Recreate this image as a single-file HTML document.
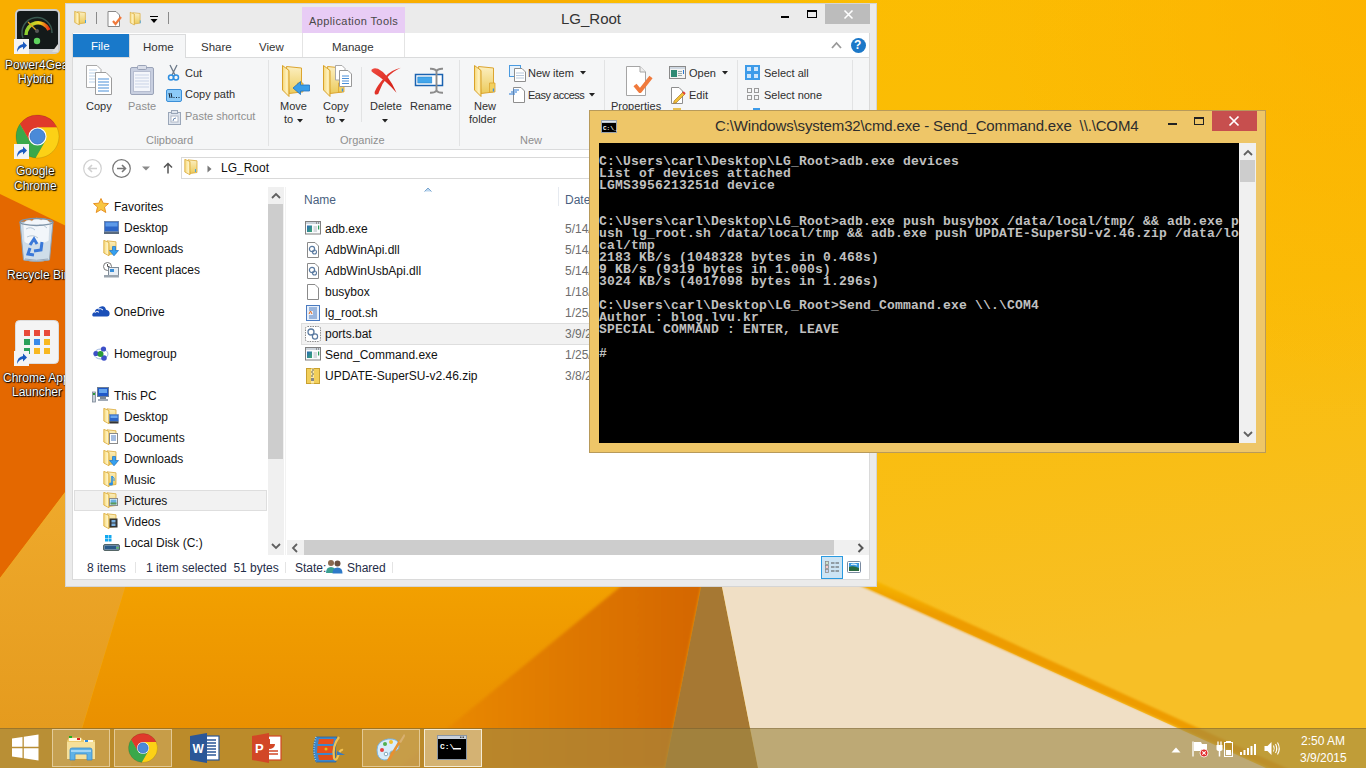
<!DOCTYPE html>
<html><head><meta charset="utf-8">
<style>
*{box-sizing:border-box;margin:0;padding:0}
html,body{width:1366px;height:768px;overflow:hidden;background:#f5a600;font-family:"Liberation Sans",sans-serif;font-size:12px;color:#000}
.a{position:absolute}
.t{position:absolute;white-space:pre;line-height:1}
svg{position:absolute;overflow:visible}
</style></head><body>
<svg width="0" height="0" style="position:absolute"><defs>
<linearGradient id="fBack" x1="0" y1="0" x2="0" y2="1"><stop offset="0" stop-color="#fcefc0"/><stop offset="1" stop-color="#eccb5c"/></linearGradient>
<linearGradient id="fFront" x1="0" y1="0" x2="1" y2="0"><stop offset="0" stop-color="#f6d878"/><stop offset="0.7" stop-color="#fff3c4"/><stop offset="1" stop-color="#f2d270"/></linearGradient>
<symbol id="f16" viewBox="0 0 16 17"><path d="M4 0.8 L13 1.8 V13.5 L6 14.5Z" fill="url(#fBack)" stroke="#d9aa3a" stroke-width="0.8"/><path d="M0.8 0.3 L6 2.5 V15.8 L0.8 13Z" fill="url(#fFront)" stroke="#d9aa3a" stroke-width="0.8"/></symbol>
<symbol id="f32" viewBox="0 0 34 40"><path d="M10.5 6.5 L25.5 8 V32 L13 33.5Z" fill="url(#fBack)" stroke="#dca530" stroke-width="1"/><path d="M21.5 23 H27 V32 H21.5Z" fill="#f2d060" stroke="#dca530" stroke-width="0.8"/><rect x="24.8" y="28.5" width="1.3" height="3" fill="#3b8fe6"/><path d="M6.5 5.5 L13 10.5 V36.5 L6.5 30Z" fill="url(#fFront)" stroke="#d9a22a" stroke-width="1"/></symbol>
</defs></svg>
<!-- WALLPAPER -->
<svg class="a" style="left:0;top:0" width="1366" height="768" viewBox="0 0 1366 768">
<defs>
<linearGradient id="gY" x1="0" y1="0" x2="0.3" y2="1">
<stop offset="0" stop-color="#fcbc00"/><stop offset="0.6" stop-color="#fabd08"/><stop offset="1" stop-color="#f7bf26"/>
</linearGradient>
<linearGradient id="gOr" gradientUnits="userSpaceOnUse" x1="450" y1="0" x2="700" y2="0">
<stop offset="0" stop-color="#e88800"/><stop offset="1" stop-color="#d46600"/>
</linearGradient>
<linearGradient id="gSt" gradientUnits="userSpaceOnUse" x1="0" y1="0" x2="-4" y2="10">
<stop offset="0" stop-color="#f4b200"/><stop offset="1" stop-color="#ee9e00"/>
</linearGradient>
</defs>
<rect x="0" y="0" width="1366" height="768" fill="url(#gY)"/>
<rect x="0" y="0" width="600" height="768" fill="#f9ae00"/>
<radialGradient id="gTR" gradientUnits="userSpaceOnUse" cx="1366" cy="0" r="420"><stop offset="0" stop-color="#fdb200" stop-opacity="0.8"/><stop offset="1" stop-color="#fdb200" stop-opacity="0"/></radialGradient>
<rect x="600" y="0" width="766" height="768" fill="url(#gTR)"/>
<!-- dark orange wedge left -->
<polygon points="0,194 213,297 0,578" fill="#e46800"/>
<!-- pale strip bottom-left -->
<linearGradient id="gPale" gradientUnits="userSpaceOnUse" x1="0" y1="480" x2="0" y2="728"><stop offset="0" stop-color="#efaa2c"/><stop offset="1" stop-color="#e59b1e"/></linearGradient>
<polygon points="0,578 213,297 300,297 125,588 82,728 70,768 0,768" fill="url(#gPale)"/>
<!-- bottom middle orange -->
<linearGradient id="gMid" gradientUnits="userSpaceOnUse" x1="0" y1="587" x2="0" y2="728"><stop offset="0" stop-color="#f2a000"/><stop offset="1" stop-color="#ea9000"/></linearGradient>
<polygon points="125,588 153,492 720,480 701,587 665,768 70,768" fill="url(#gMid)"/>
<!-- darker orange diagonal -->
<filter id="bl" x="-10%" y="-10%" width="120%" height="120%"><feGaussianBlur stdDeviation="1.5"/></filter>
<polygon points="620,587 740,490 701,587 665,768 399,768" fill="url(#gOr)" filter="url(#bl)"/>
<!-- khaki shadow -->
<polygon points="701,587 722,587 758,768 665,768" fill="#a67833"/>
<!-- cream -->
<polygon points="722,587 866,587 1266,768 758,768" fill="#f0dfc5"/>
<!-- fold stripe -->
<filter id="bl2" x="-5%" y="-20%" width="110%" height="140%"><feGaussianBlur stdDeviation="1.2"/></filter>
<g filter="url(#bl2)"><polygon points="700,501 863,575 1400,820 1400,826 863,587 700,513" fill="url(#gSt2)"/></g>
<linearGradient id="gSt2" gradientUnits="userSpaceOnUse" x1="1000" y1="618" x2="996" y2="632"><stop offset="0" stop-color="#f6b400"/><stop offset="1" stop-color="#ee9c00"/></linearGradient>

</svg>

<!-- DESKTOP ICONS -->
<div id="dicons" style="font-size:12px;color:#fff">
<svg style="left:14px;top:8px" width="47" height="47" viewBox="0 0 47 47"><rect x="1" y="1" width="45" height="45" rx="5" fill="#c9ccd0"/><rect x="3" y="3" width="41" height="38" rx="3" fill="#141a1a"/><path d="M9 30 A15 15 0 1 1 38 25" stroke="#3a5a50" stroke-width="1.5" fill="none"/><path d="M12 27 A12 12 0 0 1 35 22" stroke="url(#gauge)" stroke-width="3.5" fill="none"/><path d="M22 22 L14 14" stroke="#e0a020" stroke-width="1.3"/><circle cx="23" cy="23" r="2" fill="#555"/><circle cx="23" cy="33" r="3.2" fill="#5fd35f"/><path d="M38 44 L44 36 V44Z" fill="#ddd"/><defs><linearGradient id="gauge" x1="0" x2="1"><stop offset="0" stop-color="#8ad030"/><stop offset="0.6" stop-color="#f0d020"/><stop offset="1" stop-color="#e83010"/></linearGradient></defs></svg>
<svg style="left:14px;top:39px" width="15" height="15" viewBox="0 0 15 15"><rect x="0" y="0" width="15" height="15" fill="#f4f4f4"/><path d="M3 13 Q3 6 9 5 V2.5 L13 6.5 L9 10.5 V8 Q5 8.5 3 13Z" fill="#1a5ac0"/></svg>
<div class="t" style="left:5px;top:59px;text-shadow:0 0 2px #000,1px 1px 1px #000,0 0 1px #000">Power4Gear</div>
<div class="t" style="left:18px;top:73px;text-shadow:0 0 2px #000,1px 1px 1px #000,0 0 1px #000">Hybrid</div>
<svg style="left:15px;top:114px" width="45" height="45" viewBox="0 0 45 45"><g transform="translate(22.5,22.5)"><path d="M0 0 L-7.82 4.51 L-17.58 -12.38 A21.5 21.5 0 0 1 19.51 -9.03 L0.00 -9.03Z" fill="#e0392b"/><path d="M0 0 L0.00 -9.03 L19.51 -9.03 A21.5 21.5 0 0 1 -1.94 21.41 L7.82 4.51Z" fill="#fcd116"/><path d="M0 0 L7.82 4.51 L-1.94 21.41 A21.5 21.5 0 0 1 -17.58 -12.38 L-7.82 4.51Z" fill="#3ba84a"/><circle r="21.50" fill="none" stroke="rgba(0,0,0,0.12)" stroke-width="1"/><circle r="9.03" fill="#fff"/><circle r="7.52" fill="#4a8ad8"/><circle r="7.52" fill="none" stroke="#2f6cc0" stroke-width="0.8"/></g></svg>
<svg style="left:14px;top:144px" width="15" height="15" viewBox="0 0 15 15"><rect x="0" y="0" width="15" height="15" fill="#f4f4f4"/><path d="M3 13 Q3 6 9 5 V2.5 L13 6.5 L9 10.5 V8 Q5 8.5 3 13Z" fill="#1a5ac0"/></svg>
<div class="t" style="left:16px;top:165px;text-shadow:0 0 2px #000,1px 1px 1px #000,0 0 1px #000">Google</div>
<div class="t" style="left:14px;top:180px;text-shadow:0 0 2px #000,1px 1px 1px #000,0 0 1px #000">Chrome</div>
<svg style="left:17px;top:215px" width="39" height="48" viewBox="0 0 39 48"><path d="M3 7 L6.5 45 Q19.5 48 32.5 45 L36 7Z" fill="#cfdde9" stroke="#8fa3b6"/><path d="M6 9 Q10 3 15 6 Q19 1 24 5 Q29 2 33 8 L32 26 Q26 30 20 28 Q12 31 7 27Z" fill="#f2f6fa" stroke="#c8d4de" stroke-width="0.6"/><path d="M9 14 Q14 11 18 15 M22 10 Q27 9 30 13 M10 22 Q16 19 21 23" stroke="#b8c8d6" fill="none"/><ellipse cx="19.5" cy="7" rx="16.5" ry="3.5" fill="none" stroke="#7f94a8" stroke-width="1.3"/><path d="M13 30 L17 24 L20 29 M25 27 L24 35 L17 36 M13 33 L11 39 L17 40" stroke="#3a78d8" stroke-width="3" fill="none"/><path d="M8 44 Q19.5 46.5 31 44" stroke="#9aaabc" fill="none"/></svg>
<div class="t" style="left:7px;top:269px;text-shadow:0 0 2px #000,1px 1px 1px #000,0 0 1px #000">Recycle Bin</div>
<svg style="left:15px;top:320px" width="44" height="44" viewBox="0 0 44 44"><rect x="0.5" y="0.5" width="43" height="43" rx="4" fill="#f4f4f4" stroke="#ddd"/><g><rect x="9" y="10" width="6" height="6" fill="#e84a3a"/><rect x="19" y="10" width="6" height="6" fill="#e84a3a"/><rect x="29" y="10" width="6" height="6" fill="#e84a3a"/><rect x="9" y="19" width="6" height="6" fill="#2aa05a"/><rect x="19" y="19" width="6" height="6" fill="#3a8ae8"/><rect x="29" y="19" width="6" height="6" fill="#f8b820"/><rect x="9" y="28" width="6" height="6" fill="#2aa05a"/><rect x="19" y="28" width="6" height="6" fill="#f8b820"/><rect x="29" y="28" width="6" height="6" fill="#f8b820"/></g></svg>
<svg style="left:14px;top:351px" width="15" height="15" viewBox="0 0 15 15"><rect x="0" y="0" width="15" height="15" fill="#f4f4f4"/><path d="M3 13 Q3 6 9 5 V2.5 L13 6.5 L9 10.5 V8 Q5 8.5 3 13Z" fill="#1a5ac0"/></svg>
<div class="t" style="left:3px;top:372px;text-shadow:0 0 2px #000,1px 1px 1px #000,0 0 1px #000">Chrome App</div>
<div class="t" style="left:12px;top:386px;text-shadow:0 0 2px #000,1px 1px 1px #000,0 0 1px #000">Launcher</div>
</div>


<!-- EXPLORER WINDOW -->
<div class="a" style="left:65px;top:3px;width:812px;height:584px;background:#ebebeb;border:1px solid #d5d5d5"></div>
<!-- quick access toolbar -->
<svg style="left:74px;top:10px" width="14" height="17" viewBox="0 0 14 17"><use href="#f16" width="14" height="17"/><rect x="11" y="10" width="1" height="3" fill="#4aa3e0"/></svg>
<div class="a" style="left:96px;top:12px;width:1px;height:12px;background:#8a8a8a"></div>
<svg style="left:107px;top:11px" width="16" height="16" viewBox="0 0 16 16"><path d="M1 0.5 H9 L12.5 4 V15.5 H1Z" fill="#fff" stroke="#888"/><path d="M6 10 L8.5 13 L14 6" stroke="#f07a3c" stroke-width="2.2" fill="none"/></svg>
<svg style="left:129px;top:11px" width="14" height="16" viewBox="0 0 14 17"><use href="#f16" width="14" height="17"/><rect x="11" y="10" width="1" height="3" fill="#4aa3e0"/></svg>
<svg style="left:150px;top:16px" width="9" height="8" viewBox="0 0 9 8"><rect x="0" y="0" width="8" height="1" fill="#000"/><path d="M0.5 3 H7.5 L4 7Z" fill="#000"/></svg>
<div class="a" style="left:168px;top:12px;width:1px;height:12px;background:#8a8a8a"></div>
<!-- application tools -->
<div class="a" style="left:302px;top:7px;width:103px;height:26px;background:#e8ccf5"></div>
<div class="t" style="left:309px;top:16px;font-size:11px;letter-spacing:0.4px;color:#484848">Application Tools</div>
<div class="t" style="left:561px;top:11px;font-size:15px;color:#333">LG_Root</div>
<!-- caption buttons -->
<div class="a" style="left:781px;top:16px;width:8px;height:2px;background:#000"></div>
<div class="a" style="left:807px;top:10px;width:10px;height:8px;border:1px solid #000;border-top-width:2px"></div>
<div class="a" style="left:825px;top:4px;width:45px;height:20px;background:#bcbcbc"></div>
<svg style="left:843px;top:9px" width="12" height="12" viewBox="0 0 12 12"><path d="M1.5 1.5 L9.5 9.5 M9.5 1.5 L1.5 9.5" stroke="#fff" stroke-width="1.6"/></svg>
<!-- tab row -->
<div class="a" style="left:73px;top:33px;width:796px;height:24px;background:#fff"></div>
<div class="a" style="left:73px;top:34px;width:56px;height:23px;background:#1979ca"></div>
<div class="t" style="left:91px;top:41px;font-size:11.5px;color:#fff">File</div>
<div class="a" style="left:129px;top:34px;width:57px;height:24px;background:#f5f6f7;border:1px solid #dadbdc;border-bottom:none"></div>
<div class="t" style="left:143px;top:42px;font-size:11.5px;color:#333">Home</div>
<div class="t" style="left:201px;top:42px;font-size:11.5px;color:#333">Share</div>
<div class="t" style="left:259px;top:42px;font-size:11.5px;color:#333">View</div>
<div class="a" style="left:302px;top:33px;width:1px;height:24px;background:#e4e4e4"></div>
<div class="a" style="left:404px;top:33px;width:1px;height:24px;background:#e4e4e4"></div>
<div class="t" style="left:332px;top:42px;font-size:11.5px;color:#333">Manage</div>
<svg style="left:831px;top:41px" width="11" height="8" viewBox="0 0 11 8"><path d="M1 7 L5.5 2 L10 7" stroke="#999" stroke-width="1.8" fill="none"/></svg>
<div class="a" style="left:851px;top:38px;width:15px;height:15px;border-radius:50%;background:#1c78c8"></div>
<div class="t" style="left:854px;top:39px;font-size:12px;font-weight:bold;color:#fff">?</div>
<!-- ribbon body -->
<div class="a" style="left:73px;top:57px;width:796px;height:93px;background:#f5f6f7;border-top:1px solid #dadbdc;border-bottom:1px solid #dadbdc"></div>
<div class="a" style="left:130px;top:57px;width:55px;height:2px;background:#f5f6f7"></div>
<!-- RIBBON CONTENT -->
<div id="rib" style="font-size:11px;color:#2e2e2e">
<!-- Copy icon -->
<svg style="left:84px;top:64px" width="30" height="32" viewBox="0 0 30 32"><path d="M2.5 1.5 H13 L17 5.5 V23.5 H2.5Z" fill="#fff" stroke="#a9a9a9"/><path d="M5 6h8M5 9h9M5 12h9M5 15h9M5 18h9" stroke="#bcd3ea"/><path d="M11.5 8.5 H22 L27.5 14 V30.5 H11.5Z" fill="#fff" stroke="#9c9c9c"/><path d="M14 15h11M14 18h11M14 21h11M14 24h11M14 27h11" stroke="#4a8fd8" stroke-width="1.2"/></svg>
<div class="t" style="left:86px;top:101px">Copy</div>
<!-- Paste icon -->
<svg style="left:129px;top:64px" width="27" height="32" viewBox="0 0 27 32"><rect x="1.5" y="3.5" width="23" height="27" rx="1.5" fill="#c8cfe0" stroke="#9aa3b8"/><rect x="4.5" y="7.5" width="17" height="20" fill="#f4f6fb" stroke="#b6bdd0"/><path d="M6 11h14M6 14h14M6 17h14M6 20h14M6 23h14" stroke="#c9d3e6"/><rect x="8.5" y="1.5" width="9" height="4" rx="1" fill="#d9dde8" stroke="#9aa3b8"/></svg>
<div class="t" style="left:128px;top:101px;color:#8f8f8f">Paste</div>
<!-- Cut -->
<svg style="left:167px;top:64px" width="13" height="17" viewBox="0 0 13 17"><path d="M3 1 L8 11 M10 1 L5 11" stroke="#6b7888" stroke-width="1.3"/><circle cx="4" cy="13.5" r="2.5" fill="none" stroke="#2d8ee0" stroke-width="1.5"/><circle cx="9" cy="13.5" r="2.5" fill="none" stroke="#2d8ee0" stroke-width="1.5"/></svg>
<div class="t" style="left:185px;top:68px">Cut</div>
<!-- Copy path -->
<svg style="left:166px;top:89px" width="16" height="13" viewBox="0 0 16 13"><rect x="0.5" y="0.5" width="15" height="12" rx="1.5" fill="#8ccaf7" stroke="#3b8fd8"/><path d="M3 4 L4 9 M5 4 L6 9 M7.5 8.5h1M10 8.5h1M12.5 8.5h1" stroke="#123" stroke-width="1"/></svg>
<div class="t" style="left:185px;top:89px">Copy path</div>
<!-- Paste shortcut -->
<svg style="left:168px;top:110px" width="13" height="15" viewBox="0 0 13 15"><rect x="0.5" y="2.5" width="12" height="12" fill="#dfe5ee" stroke="#9aa6b8"/><rect x="3.5" y="0.5" width="6" height="3" fill="#dfe5ee" stroke="#9aa6b8"/><rect x="3" y="6" width="7" height="6" fill="#fff" stroke="#b0b8c6"/><path d="M5 11 Q5 8 8 8" stroke="#6b87b0" fill="none"/></svg>
<div class="t" style="left:185px;top:111px;color:#8f8f8f">Paste shortcut</div>
<div class="t" style="left:146px;top:135px;color:#8f8f8f">Clipboard</div>
<div class="a" style="left:268px;top:60px;width:1px;height:86px;background:#e2e3e4"></div>
<!-- Move to -->
<svg style="left:276px;top:60px" width="36" height="40" viewBox="0 0 36 40"><use href="#f32" width="34" height="40"/><path d="M17 28 L24.5 21.5 V25 H33.5 V31 H24.5 V34.5Z" fill="#3a9ee8" stroke="#1f72c0" stroke-width="0.8"/></svg>
<div class="t" style="left:280px;top:101px">Move</div>
<div class="t" style="left:284px;top:114px">to</div>
<svg style="left:297px;top:119px" width="6" height="4" viewBox="0 0 6 4"><path d="M0 0H6L3 3.5Z" fill="#222"/></svg>
<!-- Copy to -->
<svg style="left:317px;top:60px" width="36" height="40" viewBox="0 0 36 40"><use href="#f32" width="34" height="40"/><path d="M18.5 5.5 H25 L28 8.5 V20 H18.5Z" fill="#fff" stroke="#a9a9a9"/><path d="M22.5 10.5 H31 L34.5 14 V26.5 H22.5Z" fill="#fff" stroke="#999"/><path d="M25 16h7M25 18.5h7M25 21h7M25 23.5h7" stroke="#4a8fd8"/></svg>
<div class="t" style="left:323px;top:101px">Copy</div>
<div class="t" style="left:326px;top:114px">to</div>
<svg style="left:339px;top:119px" width="6" height="4" viewBox="0 0 6 4"><path d="M0 0H6L3 3.5Z" fill="#222"/></svg>
<div class="a" style="left:361px;top:67px;width:1px;height:55px;background:#e2e3e4"></div>
<!-- Delete -->
<svg style="left:371px;top:67px" width="30" height="28" viewBox="0 0 30 28"><defs><linearGradient id="gDel" x1="0" y1="0" x2="1" y2="1"><stop offset="0" stop-color="#f04a40"/><stop offset="1" stop-color="#d01a10"/></linearGradient></defs><path d="M0.5 2.8 Q2.5 0.3 7 1.8 Q17 6.5 25.5 25.8 Q15 13.5 2.2 5.8 Q-0.3 4.3 0.5 2.8Z" fill="url(#gDel)"/><path d="M29.8 0.8 Q20 3 14 10 Q6.5 18 3.8 24.5 Q3 27.8 5.6 27.6 Q7.8 27.3 8.3 24.2 Q11 16.5 16 10.8 Q22 4.2 29.8 0.8Z" fill="url(#gDel)"/></svg>
<div class="t" style="left:370px;top:101px">Delete</div>
<svg style="left:382px;top:119px" width="6" height="4" viewBox="0 0 6 4"><path d="M0 0H6L3 3.5Z" fill="#222"/></svg>
<!-- Rename -->
<svg style="left:414px;top:67px" width="30" height="27" viewBox="0 0 30 27"><rect x="1.5" y="7.5" width="27" height="11" fill="#fff" stroke="#1a62b0" stroke-width="1.5"/><rect x="3.8" y="10" width="14" height="6" fill="#42a6ec" stroke="#2a86cc" stroke-width="0.6"/><path d="M16 1.8 Q21 1.5 22.5 4 Q24 1.5 29 1.8 M22.5 4 V23.5 M16 25.8 Q21 26 22.5 23.5 Q24 26 29 25.8" stroke="#8c8c8c" stroke-width="1.9" fill="none"/></svg>
<div class="t" style="left:410px;top:101px">Rename</div>
<div class="t" style="left:340px;top:135px;color:#8f8f8f">Organize</div>
<div class="a" style="left:459px;top:60px;width:1px;height:86px;background:#e2e3e4"></div>
<!-- New folder -->
<svg style="left:468px;top:60px" width="34" height="40" viewBox="0 0 34 40"><use href="#f32" width="34" height="40"/></svg>
<div class="t" style="left:474px;top:101px">New</div>
<div class="t" style="left:469px;top:114px">folder</div>
<!-- New item -->
<svg style="left:509px;top:65px" width="17" height="17" viewBox="0 0 17 17"><rect x="0.5" y="0.5" width="11" height="11" fill="#e8f2fb" stroke="#4a9ae0"/><path d="M5.5 3.5 H13 L16.5 7 V16.5 H5.5Z" fill="#fff" stroke="#8e8e8e"/><path d="M7 8h8M7 10.5h8M7 13h8" stroke="#b9c9dc"/></svg>
<div class="t" style="left:528px;top:68px">New item</div>
<svg style="left:580px;top:71px" width="6" height="4" viewBox="0 0 6 4"><path d="M0 0H6L3 3.5Z" fill="#222"/></svg>
<!-- Easy access -->
<svg style="left:509px;top:87px" width="17" height="16" viewBox="0 0 17 16"><path d="M4.5 0.5 H12 L15.5 4 V15.5 H4.5Z" fill="#fff" stroke="#8e8e8e"/><path d="M4 3h6M2 5h6M0 7h6" stroke="#2a7ad6" stroke-width="1.1"/></svg>
<div class="t" style="left:528px;top:90px;letter-spacing:-0.5px">Easy access</div>
<svg style="left:589px;top:93px" width="6" height="4" viewBox="0 0 6 4"><path d="M0 0H6L3 3.5Z" fill="#222"/></svg>
<div class="t" style="left:520px;top:135px;color:#8f8f8f">New</div>
<div class="a" style="left:604px;top:60px;width:1px;height:86px;background:#e2e3e4"></div>
<!-- Properties -->
<svg style="left:624px;top:66px" width="29" height="31" viewBox="0 0 29 31"><path d="M2.5 0.5 H16 L21.5 6 V29.5 H2.5Z" fill="#fff" stroke="#a5a5a5"/><path d="M16 0.5 V6 H21.5" fill="#eee" stroke="#a5a5a5"/><path d="M11 19 L16 25 L27 11" stroke="#f07a3c" stroke-width="4" fill="none" stroke-linejoin="round"/></svg>
<div class="t" style="left:611px;top:101px">Properties</div>
<!-- Open -->
<svg style="left:669px;top:66px" width="17" height="13" viewBox="0 0 17 13"><rect x="0.5" y="0.5" width="16" height="12" fill="#f4f4f4" stroke="#8a8a8a"/><rect x="1" y="1" width="15" height="2" fill="#cfd8e2"/><rect x="2" y="4" width="6" height="7" fill="#2f8a74"/><path d="M9 5.5h4M9 7.5h4M9 9.5h4" stroke="#9aa"/><rect x="14" y="4" width="1" height="4" fill="#2a7ad6"/></svg>
<div class="t" style="left:689px;top:68px">Open</div>
<svg style="left:722px;top:71px" width="6" height="4" viewBox="0 0 6 4"><path d="M0 0H6L3 3.5Z" fill="#222"/></svg>
<!-- Edit -->
<svg style="left:670px;top:87px" width="16" height="17" viewBox="0 0 16 17"><path d="M1.5 0.5 H9 L12.5 4 V16.5 H1.5Z" fill="#fff" stroke="#8e8e8e"/><path d="M4 14 L13 5 L15 7 L6 16 L3.5 16.5Z" fill="#f2c037" stroke="#9a6a20" stroke-width="0.6"/><path d="M13 5 L15 7" stroke="#e0403a" stroke-width="2"/></svg>
<div class="t" style="left:689px;top:90px">Edit</div>
<div class="a" style="left:737px;top:60px;width:1px;height:86px;background:#e2e3e4"></div>
<!-- Select all -->
<svg style="left:745px;top:65px" width="15" height="15" viewBox="0 0 15 15"><rect x="0" y="0" width="15" height="15" fill="#3d9be9"/><rect x="2" y="2" width="4" height="4" fill="#cfe6fb"/><rect x="9" y="2" width="4" height="4" fill="#cfe6fb"/><rect x="2" y="9" width="4" height="4" fill="#cfe6fb"/><rect x="9" y="9" width="4" height="4" fill="#cfe6fb"/></svg>
<div class="t" style="left:764px;top:68px">Select all</div>
<!-- Select none -->
<svg style="left:747px;top:88px" width="13" height="13" viewBox="0 0 13 13"><rect x="0.5" y="0.5" width="4" height="4" fill="none" stroke="#9a9a9a"/><rect x="7.5" y="0.5" width="4" height="4" fill="none" stroke="#9a9a9a"/><rect x="0.5" y="7.5" width="4" height="4" fill="none" stroke="#9a9a9a"/><rect x="7.5" y="7.5" width="4" height="4" fill="none" stroke="#9a9a9a"/></svg>
<div class="t" style="left:764px;top:90px">Select none</div>
<div class="a" style="left:852px;top:60px;width:1px;height:86px;background:#e2e3e4"></div>
<div class="a" style="left:673px;top:108px;width:8px;height:3px;background:#e8c050"></div>
<div class="a" style="left:753px;top:108px;width:7px;height:3px;background:#3d9be9"></div>
</div>
<!-- NAV BAR + PANES -->
<div class="a" style="left:73px;top:150px;width:796px;height:429px;background:#fff"></div>
<div class="a" style="left:72px;top:33px;width:798px;height:547px;border:1px solid #dadada;border-top:none"></div>
<svg style="left:83px;top:159px" width="19" height="19" viewBox="0 0 19 19"><circle cx="9.5" cy="9.5" r="8.8" fill="none" stroke="#d0d0d0" stroke-width="1.2"/><path d="M14 9.5H5.5M9 6 L5.5 9.5 L9 13" stroke="#d0d0d0" stroke-width="1.6" fill="none"/></svg>
<svg style="left:112px;top:159px" width="19" height="19" viewBox="0 0 19 19"><circle cx="9.5" cy="9.5" r="8.8" fill="none" stroke="#777" stroke-width="1.2"/><path d="M5 9.5H13.5M10 6 L13.5 9.5 L10 13" stroke="#777" stroke-width="1.6" fill="none"/></svg>
<svg style="left:142px;top:166px" width="8" height="5" viewBox="0 0 8 5"><path d="M0 0.5H8L4 4.5Z" fill="#8a8a8a"/></svg>
<svg style="left:163px;top:162px" width="10" height="12" viewBox="0 0 10 12"><path d="M5 11.5V1.5M1 5.5L5 1.5L9 5.5" stroke="#555" stroke-width="1.5" fill="none"/></svg>
<div class="a" style="left:181px;top:157px;width:430px;height:22px;border:1px solid #d9d9d9;background:#fff"></div>
<svg style="left:184px;top:159px" width="14" height="17" viewBox="0 0 14 17"><use href="#f16" x="0" y="0" width="16" height="17"/><rect x="11" y="10" width="1" height="3" fill="#4aa3e0"/></svg>
<svg style="left:207px;top:165px" width="5" height="8" viewBox="0 0 5 8"><path d="M0.5 0.5L4.5 4L0.5 7.5Z" fill="#777"/></svg>
<div class="t" style="left:221px;top:162px;font-size:12px;color:#111">LG_Root</div>
<!-- nav pane -->
<div id="nav" style="font-size:12px;color:#111">
<div class="a" style="left:268px;top:187px;width:16px;height:368px;background:#f0f0f0"></div>
<svg style="left:271px;top:192px" width="10" height="7" viewBox="0 0 10 7"><path d="M1 6L5 2L9 6" stroke="#606060" stroke-width="1.8" fill="none"/></svg>
<div class="a" style="left:268px;top:204px;width:15px;height:255px;background:#cdcdcd"></div>
<svg style="left:271px;top:543px" width="10" height="7" viewBox="0 0 10 7"><path d="M1 1L5 5L9 1" stroke="#606060" stroke-width="1.8" fill="none"/></svg>
<div class="a" style="left:285px;top:187px;width:1px;height:368px;background:#f2f2f2"></div>
<div class="a" style="left:74px;top:490px;width:193px;height:21px;background:#f2f2f2;border:1px solid #dedede"></div>
<!-- favorites -->
<svg style="left:93px;top:198px" width="16" height="15" viewBox="0 0 16 15"><path d="M8 0.5 L10.2 5.2 L15.5 5.6 L11.5 9.1 L12.8 14.5 L8 11.6 L3.2 14.5 L4.5 9.1 L0.5 5.6 L5.8 5.2Z" fill="#f8c640" stroke="#e48a1a" stroke-width="0.9"/></svg>
<div class="t" style="left:114px;top:201px">Favorites</div>
<svg style="left:104px;top:221px" width="15" height="13" viewBox="0 0 15 13"><rect x="0.5" y="0.5" width="14" height="10" fill="#2d66c8" stroke="#6b86b0"/><rect x="1.5" y="1.5" width="12" height="4" fill="#5e9ae8"/><rect x="0" y="11" width="15" height="2" fill="#5a6a7e"/></svg>
<div class="t" style="left:124px;top:222px">Desktop</div>
<svg style="left:103px;top:240px" width="16" height="17" viewBox="0 0 16 17"><use href="#f16" x="0" y="0" width="16" height="17"/><path d="M9.5 6.5 H12.5 V10.5 H15.5 L11 15.8 L6.5 10.5 H9.5Z" fill="#35a0f0" stroke="#1a70c8" stroke-width="0.7"/></svg>
<div class="t" style="left:124px;top:243px">Downloads</div>
<svg style="left:103px;top:262px" width="16" height="16" viewBox="0 0 16 16"><circle cx="4.5" cy="4.5" r="4" fill="#fff" stroke="#777"/><path d="M4.5 2V4.5H6.5" stroke="#555" fill="none"/><rect x="5.5" y="5.5" width="10" height="8" fill="#e8eef4" stroke="#7e8a96"/><rect x="7" y="7" width="4" height="3" fill="#3a8ed8"/><rect x="1" y="13" width="15" height="2.5" fill="#9aa4ae"/></svg>
<div class="t" style="left:124px;top:264px">Recent places</div>
<svg style="left:92px;top:305px" width="18" height="12" viewBox="0 0 18 12"><path d="M1.5 11.5 Q0 11.5 0.3 9.3 Q0.8 7.3 2.8 7.3 Q3 4.2 6 3.8 Q7.5 1 10.5 1.2 Q13.5 1.5 14 4.8 Q17.5 5.2 17.6 8.5 Q17.6 11.5 15 11.5Z" fill="#1b4fb8"/><path d="M2.8 7.5 Q5 5.5 7 7.2 M6 3.9 Q9 3 11 5" stroke="#fff" stroke-width="1" fill="none"/></svg>
<div class="t" style="left:114px;top:306px">OneDrive</div>
<svg style="left:93px;top:346px" width="16" height="15" viewBox="0 0 16 15"><ellipse cx="8" cy="8" rx="7" ry="5" fill="none" stroke="#9bb4e0" stroke-width="1"/><circle cx="10.5" cy="3" r="2.6" fill="#3d4fc8"/><circle cx="3" cy="7.5" r="2.6" fill="#3d4fc8"/><circle cx="11" cy="12" r="2.8" fill="#3d4fc8"/><circle cx="7.5" cy="8" r="3" fill="#2a9a3a"/></svg>
<div class="t" style="left:114px;top:348px">Homegroup</div>
<svg style="left:92px;top:387px" width="18" height="16" viewBox="0 0 18 16"><rect x="5.5" y="0.5" width="11" height="9" fill="#1f58c8" stroke="#6b7d96"/><rect x="7" y="2" width="8" height="4" fill="#66a6ee"/><rect x="8" y="10" width="6" height="2" fill="#7c8896"/><rect x="6" y="12" width="10" height="2" fill="#a0aab6"/><rect x="0.5" y="5" width="3" height="10" fill="#c8cfd8" stroke="#7c8896" stroke-width="0.8"/><rect x="1" y="6" width="2" height="2" fill="#2a9a3a"/></svg>
<div class="t" style="left:114px;top:390px">This PC</div>
<svg style="left:103px;top:408px" width="16" height="17" viewBox="0 0 16 17"><use href="#f16" x="0" y="0" width="16" height="17"/><rect x="6.5" y="6.5" width="9" height="7" fill="#2d66c8" stroke="#6a8ab8" stroke-width="0.6"/><rect x="7.5" y="7.5" width="7" height="2.5" fill="#6aa6ee"/><rect x="6.5" y="13.5" width="9" height="2" fill="#333"/></svg>
<div class="t" style="left:124px;top:411px">Desktop</div>
<svg style="left:103px;top:429px" width="16" height="17" viewBox="0 0 16 17"><use href="#f16" x="0" y="0" width="16" height="17"/><rect x="6.5" y="4.5" width="8" height="10" fill="#fff" stroke="#8a8a8a"/><path d="M8 7h5M8 9h5M8 11h5" stroke="#4a7ac0"/></svg>
<div class="t" style="left:124px;top:432px">Documents</div>
<svg style="left:103px;top:450px" width="16" height="17" viewBox="0 0 16 17"><use href="#f16" x="0" y="0" width="16" height="17"/><path d="M9.5 6.5 H12.5 V10.5 H15.5 L11 15.8 L6.5 10.5 H9.5Z" fill="#35a0f0" stroke="#1a70c8" stroke-width="0.7"/></svg>
<div class="t" style="left:124px;top:453px">Downloads</div>
<svg style="left:103px;top:471px" width="16" height="17" viewBox="0 0 16 17"><use href="#f16" x="0" y="0" width="16" height="17"/><path d="M9 5V13" stroke="#2b8fe5" stroke-width="1.6"/><ellipse cx="8" cy="13" rx="2" ry="1.5" fill="#2b8fe5"/><path d="M9 5 Q12 7 11 10" stroke="#2b8fe5" fill="none"/></svg>
<div class="t" style="left:124px;top:474px">Music</div>
<svg style="left:103px;top:492px" width="16" height="17" viewBox="0 0 16 17"><use href="#f16" x="0" y="0" width="16" height="17"/><rect x="6.5" y="6.5" width="8" height="7" fill="#fff" stroke="#8a8a8a"/><rect x="7.5" y="7.5" width="6" height="5" fill="#6ab0e0"/><rect x="7.5" y="10.5" width="6" height="2" fill="#5a9a5a"/></svg>
<div class="t" style="left:124px;top:495px">Pictures</div>
<svg style="left:103px;top:513px" width="16" height="17" viewBox="0 0 16 17"><use href="#f16" x="0" y="0" width="16" height="17"/><rect x="6.5" y="5.5" width="8" height="9" fill="#333"/><rect x="8.5" y="7" width="4" height="2.5" fill="#7ab0e0"/><rect x="8.5" y="10.5" width="4" height="2.5" fill="#7ab0e0"/></svg>
<div class="t" style="left:124px;top:516px">Videos</div>
<svg style="left:103px;top:535px" width="17" height="16" viewBox="0 0 17 16"><rect x="2" y="0" width="3" height="3" fill="#12a8f0"/><rect x="5.5" y="0" width="3" height="3" fill="#12a8f0"/><rect x="2" y="3.5" width="3" height="3" fill="#12a8f0"/><rect x="5.5" y="3.5" width="3" height="3" fill="#12a8f0"/><rect x="0.5" y="9.5" width="16" height="6" rx="1.5" fill="#6c8aa6" stroke="#566"/><rect x="2" y="11" width="11" height="3" fill="#2a5a88"/><rect x="13.5" y="12" width="2" height="1.5" fill="#5c5"/></svg>
<div class="t" style="left:124px;top:537px">Local Disk (C:)</div>
</div>
<!-- content pane -->
<div id="files" style="font-size:12px;color:#111">
<div class="t" style="left:304px;top:194px;color:#4a5f80">Name</div>
<svg style="left:424px;top:187px" width="8" height="5" viewBox="0 0 8 5"><path d="M0.5 4.5L4 1L7.5 4.5" stroke="#7aa6d0" fill="#bcd6ee"/></svg>
<div class="a" style="left:558px;top:187px;width:1px;height:19px;background:#e6eaf0"></div>
<div class="t" style="left:565px;top:194px;color:#4a5f80">Date</div>
<div class="a" style="left:301px;top:323px;width:300px;height:22px;background:#f2f2f2;border:1px solid #dedede"></div>
<svg style="left:305px;top:221px" width="16" height="16" viewBox="0 0 16 16"><defs><linearGradient id="gExe" x1="0" y1="0" x2="1" y2="1"><stop offset="0" stop-color="#2a6ab8"/><stop offset="1" stop-color="#3aa870"/></linearGradient></defs><rect x="0.5" y="0.5" width="15" height="12.5" fill="#fafbfc" stroke="#808080"/><rect x="1" y="1" width="14" height="2" fill="#ccd4dc"/><rect x="11" y="1.5" width="1" height="1" fill="#555"/><rect x="13" y="1.5" width="1" height="1" fill="#555"/><rect x="2" y="4.5" width="5" height="6.5" fill="url(#gExe)"/><path d="M8.5 6h3.5M8.5 8h3.5M8.5 10h3.5" stroke="#b0b8c0"/><rect x="13" y="4.5" width="1.2" height="4" fill="#2a9a5a"/></svg>
<div class="t" style="left:325px;top:223px">adb.exe</div>
<div class="t" style="left:565px;top:223px;color:#6d6d6d">5/14/2014 10:05 AM</div>
<svg style="left:305px;top:242px" width="16" height="16" viewBox="0 0 16 16"><path d="M2.5 0.5H10L13.5 4V15.5H2.5Z" fill="#fff" stroke="#8a8a8a"/><circle cx="7" cy="7" r="2.6" fill="none" stroke="#5a7aa0" stroke-width="1.2"/><circle cx="9.5" cy="10" r="2" fill="none" stroke="#5a7aa0" stroke-width="1.1"/></svg>
<div class="t" style="left:325px;top:244px">AdbWinApi.dll</div>
<div class="t" style="left:565px;top:244px;color:#6d6d6d">5/14/2014 10:05 AM</div>
<svg style="left:305px;top:263px" width="16" height="16" viewBox="0 0 16 16"><path d="M2.5 0.5H10L13.5 4V15.5H2.5Z" fill="#fff" stroke="#8a8a8a"/><circle cx="7" cy="7" r="2.6" fill="none" stroke="#5a7aa0" stroke-width="1.2"/><circle cx="9.5" cy="10" r="2" fill="none" stroke="#5a7aa0" stroke-width="1.1"/></svg>
<div class="t" style="left:325px;top:265px">AdbWinUsbApi.dll</div>
<div class="t" style="left:565px;top:265px;color:#6d6d6d">5/14/2014 10:05 AM</div>
<svg style="left:305px;top:284px" width="16" height="16" viewBox="0 0 16 16"><path d="M2.5 0.5H10L13.5 4V15.5H2.5Z" fill="#fff" stroke="#8a8a8a"/></svg>
<div class="t" style="left:325px;top:286px">busybox</div>
<div class="t" style="left:565px;top:286px;color:#6d6d6d">1/18/2015 4:11 PM</div>
<svg style="left:305px;top:305px" width="16" height="16" viewBox="0 0 16 16"><rect x="1.5" y="0.5" width="13" height="15" fill="#e8f0fa" stroke="#4a7ac0"/><path d="M4 3h8M4 5h8M8 7h4M8 9h4M4 11h8M4 13h8" stroke="#4a7ac0"/><path d="M4 9 L5.5 6 L7 9" stroke="#e06a20" fill="none"/></svg>
<div class="t" style="left:325px;top:307px">lg_root.sh</div>
<div class="t" style="left:565px;top:307px;color:#6d6d6d">1/25/2015 9:40 PM</div>
<svg style="left:305px;top:326px" width="16" height="16" viewBox="0 0 16 16"><rect x="0.5" y="0.5" width="15" height="15" rx="2" fill="#fff" stroke="#8a8a8a" stroke-dasharray="1.5 1"/><circle cx="6" cy="6" r="3" fill="none" stroke="#5a7aa0" stroke-width="1.3"/><circle cx="10" cy="10.5" r="2.6" fill="none" stroke="#5a7aa0" stroke-width="1.2"/></svg>
<div class="t" style="left:325px;top:328px">ports.bat</div>
<div class="t" style="left:565px;top:328px;color:#6d6d6d">3/9/2015 2:46 AM</div>
<svg style="left:305px;top:347px" width="16" height="16" viewBox="0 0 16 16"><defs><linearGradient id="gExe" x1="0" y1="0" x2="1" y2="1"><stop offset="0" stop-color="#2a6ab8"/><stop offset="1" stop-color="#3aa870"/></linearGradient></defs><rect x="0.5" y="0.5" width="15" height="12.5" fill="#fafbfc" stroke="#808080"/><rect x="1" y="1" width="14" height="2" fill="#ccd4dc"/><rect x="11" y="1.5" width="1" height="1" fill="#555"/><rect x="13" y="1.5" width="1" height="1" fill="#555"/><rect x="2" y="4.5" width="5" height="6.5" fill="url(#gExe)"/><path d="M8.5 6h3.5M8.5 8h3.5M8.5 10h3.5" stroke="#b0b8c0"/><rect x="13" y="4.5" width="1.2" height="4" fill="#2a9a5a"/></svg>
<div class="t" style="left:325px;top:349px">Send_Command.exe</div>
<div class="t" style="left:565px;top:349px;color:#6d6d6d">1/25/2015 9:40 PM</div>
<svg style="left:305px;top:368px" width="16" height="16" viewBox="0 0 16 16"><rect x="1.5" y="0.5" width="13" height="15" fill="#f2cf5a" stroke="#c8a030"/><rect x="6" y="0.5" width="3" height="15" fill="#fbe9a8"/><path d="M7 2h2M6 4h2M7 6h2M6 8h2" stroke="#665"/><rect x="6" y="10" width="3" height="3" fill="#888"/></svg>
<div class="t" style="left:325px;top:370px">UPDATE-SuperSU-v2.46.zip</div>
<div class="t" style="left:565px;top:370px;color:#6d6d6d">3/8/2015 11:02 PM</div>

</div>
<!-- h scrollbar -->
<div class="a" style="left:287px;top:540px;width:582px;height:15px;background:#f0f0f0"></div>
<svg style="left:291px;top:543px" width="7" height="10" viewBox="0 0 7 10"><path d="M6 1L2 5L6 9" stroke="#606060" stroke-width="1.8" fill="none"/></svg>
<div class="a" style="left:304px;top:540px;width:530px;height:15px;background:#cdcdcd"></div>
<svg style="left:857px;top:543px" width="8" height="10" viewBox="0 0 8 10"><path d="M1.5 1L5.5 5L1.5 9" stroke="#555" stroke-width="2" fill="none"/></svg>
<!-- status bar -->
<div id="status" style="font-size:12px;color:#1f2d48">
<div class="t" style="left:87px;top:562px">8 items</div>
<div class="a" style="left:135px;top:562px;width:1px;height:11px;background:#e4e4e4"></div>
<div class="t" style="left:146px;top:562px">1 item selected  51 bytes</div>
<div class="a" style="left:285px;top:562px;width:1px;height:11px;background:#e4e4e4"></div>
<div class="t" style="left:295px;top:562px">State:</div>
<svg style="left:326px;top:559px" width="17" height="15" viewBox="0 0 17 15"><circle cx="5" cy="4" r="3" fill="#8a6a50"/><path d="M0 14 Q0 8 5 8 Q10 8 10 14Z" fill="#3aa090"/><circle cx="11.5" cy="4.5" r="3" fill="#6a5040"/><path d="M6.5 14.5 Q6.5 8.5 11.5 8.5 Q16.5 8.5 16.5 14.5Z" fill="#2d7ac8"/></svg>
<div class="t" style="left:347px;top:562px">Shared</div>
<div class="a" style="left:392px;top:562px;width:1px;height:11px;background:#e4e4e4"></div>
<div class="a" style="left:821px;top:556px;width:22px;height:23px;background:#cce4f4;border:1px solid #2a9ae0"></div>
<svg style="left:825px;top:561px" width="16" height="13" viewBox="0 0 16 13"><rect x="0.5" y="0.5" width="3" height="3" fill="#fff" stroke="#888" stroke-width="0.8"/><rect x="0.5" y="4.5" width="3" height="3" fill="#fff" stroke="#888" stroke-width="0.8"/><rect x="0.5" y="8.5" width="3" height="3" fill="#fff" stroke="#888" stroke-width="0.8"/><rect x="1.5" y="1.5" width="1" height="1" fill="#3a9a3a"/><rect x="1.5" y="5.5" width="1" height="1" fill="#e02020"/><rect x="1.5" y="9.5" width="1" height="1" fill="#2a5ad0"/><path d="M6 2h3.5M10.5 2h3.5M6 6h3.5M10.5 6h3.5M6 10h3.5M10.5 10h3.5" stroke="#555" stroke-width="1.2"/></svg>
<svg style="left:847px;top:561px" width="14" height="12" viewBox="0 0 14 12"><rect x="0.5" y="0.5" width="13" height="11" rx="1" fill="#fff" stroke="#7a8aa0"/><rect x="2" y="2" width="10" height="8" fill="#3a98e0"/><path d="M2 6 Q6 4 12 7 V10 H2Z" fill="#2a6a40"/><path d="M4 3.5 Q7 2.5 10 4" stroke="#e8f4ff" stroke-width="1.2" fill="none"/></svg>
<!-- CMD WINDOW -->
<div class="a" style="left:589px;top:110px;width:677px;height:343px;background:#eec668;border:1px solid #b89a5a"></div>
<svg style="left:601px;top:120px" width="16" height="13" viewBox="0 0 16 13"><rect x="0" y="0" width="16" height="13" fill="#9aa4ae"/><rect x="1" y="3" width="14" height="9" fill="#000"/><rect x="1" y="1" width="14" height="1.5" fill="#dde3ea"/><text x="2" y="10" font-family="Liberation Mono" font-size="6" font-weight="bold" fill="#fff">C:\_</text></svg>
<div class="t" style="left:715px;top:118px;font-size:15px;letter-spacing:-0.15px;color:#2d2d2d">C:\Windows\system32\cmd.exe - Send_Command.exe  \\.\COM4</div>
<div class="a" style="left:1168px;top:123px;width:9px;height:2px;background:#222"></div>
<div class="a" style="left:1194px;top:117px;width:10px;height:8px;border:1px solid #222;border-top-width:2px"></div>
<div class="a" style="left:1212px;top:111px;width:45px;height:20px;background:#c74f4e"></div>
<svg style="left:1228px;top:115px" width="12" height="12" viewBox="0 0 12 12"><path d="M1.5 1.5 L10.5 10.5 M10.5 1.5 L1.5 10.5" stroke="#fff" stroke-width="1.7"/></svg>
<div class="a" style="left:599px;top:143px;width:640px;height:300px;background:#000;overflow:hidden">
<pre class="a" style="left:0;top:13px;margin:0;font-family:'Liberation Mono',monospace;font-weight:bold;font-size:13px;letter-spacing:0.2px;line-height:12px;color:#c0c0c0">
C:\Users\carl\Desktop\LG_Root&gt;adb.exe devices
List of devices attached
LGMS3956213251d device


C:\Users\carl\Desktop\LG_Root&gt;adb.exe push busybox /data/local/tmp/ &amp;&amp; adb.exe p
ush lg_root.sh /data/local/tmp &amp;&amp; adb.exe push UPDATE-SuperSU-v2.46.zip /data/lo
cal/tmp
2183 KB/s (1048328 bytes in 0.468s)
9 KB/s (9319 bytes in 1.000s)
3024 KB/s (4017098 bytes in 1.296s)

C:\Users\carl\Desktop\LG_Root&gt;Send_Command.exe \\.\COM4
Author : blog.lvu.kr
SPECIAL COMMAND : ENTER, LEAVE

#</pre>
</div>
<div class="a" style="left:1239px;top:143px;width:17px;height:300px;background:#f0f0f0"></div>
<svg style="left:1243px;top:149px" width="10" height="7" viewBox="0 0 10 7"><path d="M1 6L5 2L9 6" stroke="#606060" stroke-width="1.8" fill="none"/></svg>
<div class="a" style="left:1240px;top:160px;width:15px;height:22px;background:#cdcdcd"></div>
<svg style="left:1243px;top:431px" width="10" height="7" viewBox="0 0 10 7"><path d="M1 1L5 5L9 1" stroke="#606060" stroke-width="1.8" fill="none"/></svg>

<!-- TASKBAR -->
<div class="a" style="left:0;top:728px;width:1366px;height:40px;background:rgba(158,136,68,0.62)"></div>
<div class="a" style="left:0;top:728px;width:1366px;height:1px;background:rgba(80,55,20,0.28)"></div>
<svg style="left:11px;top:734px" width="28" height="27" viewBox="0 0 28 27"><path d="M1 4.5 L11.5 2.9 V12.8 H1Z M12.8 2.7 L27.5 0.5 V12.8 H12.8Z M1 14.2 H11.5 V24.1 L1 22.5Z M12.8 14.2 H27.5 V26.5 L12.8 24.3Z" fill="#fff"/></svg>
<!-- explorer button -->
<div class="a" style="left:52px;top:729px;width:58px;height:38px;background:rgba(255,240,210,0.18);border:1px solid rgba(255,245,225,0.5)"></div>
<svg style="left:66px;top:735px" width="31" height="29" viewBox="0 0 31 29"><path d="M1 6 L3 2.5 H15 L17 5 H29 V24 H1Z" fill="#eccb70"/><rect x="3" y="3" width="12" height="3" fill="#fff8e0"/><rect x="3" y="1" width="3" height="2" fill="#1fb41f"/><rect x="11" y="3" width="3" height="2" fill="#d22"/><rect x="18" y="5" width="9" height="3" fill="#fff8e0"/><rect x="19" y="5" width="3" height="2" fill="#2a8ae0"/><path d="M1 7 H29 V24 H1Z" fill="#f6e09a"/><path d="M4 25 V15 Q4 13 6 13 H24 Q26 13 26 15 V25 H21 V19 H9 V25Z" fill="#5fb2e6" stroke="#3d8cc8" stroke-width="0.8"/><path d="M5 16 H25" stroke="#b8e0f8" stroke-width="1.5"/></svg>
<!-- chrome button -->
<div class="a" style="left:114px;top:729px;width:58px;height:38px;background:rgba(255,240,210,0.18);border:1px solid rgba(255,245,225,0.5)"></div>
<svg style="left:128px;top:733px" width="30" height="30" viewBox="0 0 30 30"><g transform="translate(15.0,15.0)"><path d="M0 0 L-5.27 3.04 L-11.85 -8.35 A14.5 14.5 0 0 1 13.16 -6.09 L0.00 -6.09Z" fill="#e0392b"/><path d="M0 0 L0.00 -6.09 L13.16 -6.09 A14.5 14.5 0 0 1 -1.31 14.44 L5.27 3.04Z" fill="#fcd116"/><path d="M0 0 L5.27 3.04 L-1.31 14.44 A14.5 14.5 0 0 1 -11.85 -8.35 L-5.27 3.04Z" fill="#3ba84a"/><circle r="14.50" fill="none" stroke="rgba(0,0,0,0.12)" stroke-width="1"/><circle r="6.09" fill="#fff"/><circle r="5.07" fill="#4a8ad8"/><circle r="5.07" fill="none" stroke="#2f6cc0" stroke-width="0.8"/></g></svg>
<!-- word -->
<svg style="left:189px;top:732px" width="32" height="32" viewBox="0 0 32 32"><rect x="16" y="4" width="14" height="24" fill="#fff" stroke="#2b5797" stroke-width="1.2"/><path d="M18 8h9M18 11h9M18 14h9M18 17h9M18 20h9M18 23h9" stroke="#2b5797" stroke-width="1.3"/><path d="M1 4 L18 1 V31 L1 28Z" fill="#2b5797"/><text x="3.5" y="21" font-family="Liberation Sans" font-weight="bold" font-size="12" fill="#fff">W</text></svg>
<!-- powerpoint -->
<svg style="left:251px;top:732px" width="32" height="32" viewBox="0 0 32 32"><rect x="16" y="4" width="14" height="24" fill="#fff" stroke="#d24726" stroke-width="1.2"/><path d="M19 7 A5 5 0 1 0 24 12 H19Z" fill="#d24726"/><path d="M18 19h9M18 22h9" stroke="#d24726" stroke-width="1.3"/><path d="M1 4 L18 1 V31 L1 28Z" fill="#d24726"/><text x="4" y="21" font-family="Liberation Sans" font-weight="bold" font-size="13" fill="#fff">P</text></svg>
<!-- movie maker -->
<svg style="left:312px;top:736px" width="34" height="27" viewBox="0 0 34 27"><path d="M4 1 H25 Q22 13 24 26 H4 Q-1 13 4 1Z" fill="#3f86c8" stroke="#2a62a0" stroke-width="0.8"/><path d="M4 1 Q0 13 4 26" stroke="#9ad0f0" stroke-width="1.5" fill="none" stroke-dasharray="1 1.5"/><path d="M7 3 H22 L21 8 H6Z" fill="#e8501a"/><path d="M5.5 10 H21 L20.5 17 H5Z" fill="#e8501a"/><path d="M6 19 H21 L21 24 H7Z" fill="#e05018"/><circle cx="14" cy="13" r="1.5" fill="#d8c020"/><path d="M27 1 Q20 10 22 22 Q24 26 26 20 Q28 13 31 14" stroke="#f2c050" stroke-width="2.2" fill="none"/><path d="M25 15 L33 19 H25Z" fill="#3a7ac0"/></svg>
<!-- paint button -->
<div class="a" style="left:362px;top:729px;width:58px;height:38px;background:rgba(255,240,210,0.18);border:1px solid rgba(255,245,225,0.5)"></div>
<svg style="left:375px;top:733px" width="32" height="30" viewBox="0 0 32 30"><path d="M2 17 Q2 8 13 6 Q24 5 24 13 Q24 18 18 18 Q14 18 15 22 Q16 27 9 27 Q2 26 2 17Z" fill="#d8ecfa" stroke="#7ab4e0"/><circle cx="7" cy="17" r="2" fill="#e84040"/><circle cx="10" cy="11" r="2" fill="#50b050"/><circle cx="16" cy="9" r="2" fill="#f0c030"/><circle cx="11" cy="21" r="1.8" fill="#fff" stroke="#8ab"/><path d="M13 28 L25 8" stroke="#e89030" stroke-width="2.5"/><path d="M24 9 L29 1 Q31 2 29 5 L26 10Z" fill="#d8b070"/></svg>
<!-- cmd button -->
<div class="a" style="left:424px;top:729px;width:58px;height:38px;background:rgba(255,250,235,0.38);border:1px solid rgba(255,255,245,0.75)"></div>
<svg style="left:437px;top:735px" width="30" height="25" viewBox="0 0 30 25"><rect x="0.5" y="0.5" width="29" height="24" fill="#000" stroke="#8a96a4"/><rect x="1" y="1" width="28" height="3" fill="#c8d0da"/><rect x="23" y="1.5" width="1.5" height="1.5" fill="#555"/><rect x="25.5" y="1.5" width="1.5" height="1.5" fill="#555"/><text x="3" y="14" font-family="Liberation Mono" font-weight="bold" font-size="8" fill="#fff">C:\</text><rect x="16" y="13" width="8" height="1.5" fill="#fff"/></svg>
<!-- tray -->
<svg style="left:1171px;top:747px" width="10" height="6" viewBox="0 0 10 6"><path d="M0.5 5.5 L5 0.5 L9.5 5.5Z" fill="#fff"/></svg>
<svg style="left:1192px;top:741px" width="17" height="16" viewBox="0 0 17 16"><path d="M1 0.5V15.5" stroke="#fff" stroke-width="1.3"/><path d="M2 1 H9 L10 3 H15 V10 H2Z" fill="#fff"/><circle cx="12" cy="12" r="4" fill="#e02a2a" stroke="#fff" stroke-width="0.8"/><path d="M10.3 10.3L13.7 13.7M13.7 10.3L10.3 13.7" stroke="#fff" stroke-width="1.1"/></svg>
<svg style="left:1216px;top:741px" width="17" height="16" viewBox="0 0 17 16"><path d="M2 0.5V4M5 0.5V4" stroke="#fff" stroke-width="1.3"/><path d="M0.5 4H6.5V8Q6.5 10 3.5 10Q0.5 10 0.5 8Z" fill="#fff"/><path d="M3.5 10V15.5" stroke="#fff" stroke-width="1.5"/><rect x="8.5" y="1.5" width="8" height="14" fill="none" stroke="#fff"/><rect x="10" y="0" width="5" height="1.5" fill="#fff"/><rect x="10" y="9" width="5" height="5" fill="#fff"/></svg>
<svg style="left:1240px;top:744px" width="16" height="11" viewBox="0 0 16 11"><rect x="0" y="8" width="2" height="3" fill="#fff"/><rect x="3.5" y="6" width="2" height="5" fill="#fff"/><rect x="7" y="4" width="2" height="7" fill="#fff"/><rect x="10.5" y="2" width="2" height="9" fill="#fff"/><rect x="14" y="0" width="2" height="11" fill="#fff"/></svg>
<svg style="left:1264px;top:741px" width="16" height="15" viewBox="0 0 16 15"><path d="M0.5 5H3.5L7.5 1V14L3.5 10H0.5Z" fill="#fff"/><path d="M9.5 4.5Q11 7.5 9.5 10.5M11.5 3Q14 7.5 11.5 12M13.5 1.5Q17 7.5 13.5 13.5" stroke="#fff" stroke-width="1.1" fill="none"/></svg>
<div class="t" style="left:1301px;top:735px;font-size:12px;color:#fff">2:50 AM</div>
<div class="t" style="left:1300px;top:752px;font-size:12px;color:#fff">3/9/2015</div>

</body></html>
